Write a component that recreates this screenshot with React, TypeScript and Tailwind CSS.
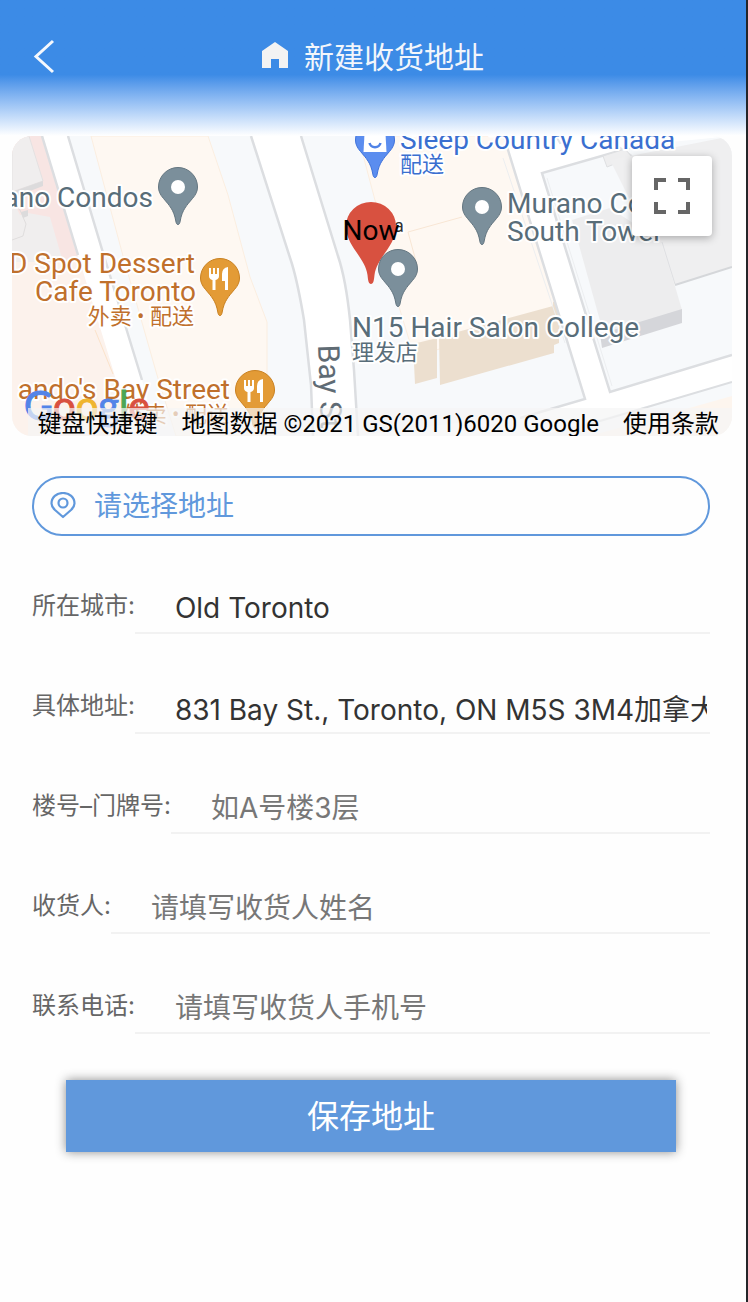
import React from 'react';

type Field = {
  id: string;
  label: string;
  value?: string;
  placeholder?: string;
  type?: string;
};

const fields: Field[] = [
  { id: 'city', label: '所在城市:', value: 'Old Toronto' },
  { id: 'address', label: '具体地址:', value: '831 Bay St., Toronto, ON M5S 3M4加拿大' },
  { id: 'unit', label: '楼号–门牌号:', placeholder: '如A号楼3层' },
  { id: 'receiver', label: '收货人:', placeholder: '请填写收货人姓名' },
  { id: 'phone', label: '联系电话:', placeholder: '请填写收货人手机号', type: 'tel' },
];

function Pin({ x, y, fill, stroke, children }: { x: number; y: number; fill: string; stroke: string; children?: React.ReactNode }) {
  return (
    <g transform={`translate(${x} ${y})`}>
      <path
        d="M0 37.500C-1.500 37.500 -1.800 36 -2.200 34C-4 23 -9 18 -14.500 11.500C-18 7.500 -19.500 4 -19.500 0A19.500 19.500 0 0 1 19.500 0C19.500 4 18 7.500 14.500 11.500C9 18 4 23 2.200 34C1.800 36 1.500 37.500 0 37.500Z"
        fill={fill}
        stroke={stroke}
        strokeWidth="1"
      />
      {children ?? <circle r="7" fill="#fff" />}
    </g>
  );
}

function Cutlery() {
  return (
    <g fill="#fff">
      <path d="M-11 -10H-9V-4H-7V-10H-5V-4H-3V-10H-1V-2Q-1 1 -4.500 2V12H-7.500V2Q-11 1 -11 -2Z" />
      <path d="M8 -11V12H5V3H2V-4Q2 -10 8 -11Z" />
    </g>
  );
}

function MapDrawing() {
  return (
    <svg
      className="block h-full w-full"
      viewBox="12 136 720 300"
      preserveAspectRatio="xMidYMid slice"
      role="img"
      aria-label="地图"
    >
      <rect x="12" y="136" width="720" height="300" fill="#f7f9fb" />

      {/* west blocks */}
      <path d="M12 136H42L80 262L92 292L126 410L134 436H12Z" fill="#fcf2ec" />
      <path d="M12 136H42L79 262H12Z" fill="#f8e5e3" />
      <path d="M12 136H29L43 181L12 192Z" fill="#f0eeee" stroke="#e4e1e1" />
      <path d="M12 192L43 181V186L12 198Z" fill="#dcdbdc" />
      <path d="M12 199L20 215L28 213L50 217L63 262H12Z" fill="#f0eeee" />
      <path d="M12 240L23 236L26 224L20 210L12 204" fill="none" stroke="#dfdddd" />
      <path d="M21 212L28 210V216L23 218Z" fill="#dcdbdc" />
      <path d="M42 136H68L104 256L142 380L157 436H132L113 370L78 255Z" fill="#fff" />
      <path d="M42 136L78 255" stroke="#dcdee1" strokeWidth="2.500" />
      <path d="M68 136L104 256L142 380" fill="none" stroke="#dcdee1" strokeWidth="2.500" />
      <path d="M91 136H208L228 195L250 277L267 322V436H176L157 375L123 256Z" fill="#fef8f2" stroke="#fbeee0" />
      <path d="M95 330L113 374" stroke="#fbe3cb" />

      {/* Bay Street */}
      <path d="M251 136L292 264Q298 284 304 320L311 385L313 436H358L354 370L350 320Q346 280 338 256L301 136Z" fill="#fff" />
      <path d="M251 136L292 264Q298 284 304 320L311 385L313 436M358 436L354 370L350 320Q346 280 338 256L301 136" fill="none" stroke="#dcdee1" strokeWidth="2.500" />

      {/* central block */}
      <path d="M358 136H504L560 303L553 318L414 356L393 287L376 204Z" fill="#fef8f2" stroke="#fbeee0" />
      <path d="M408 232L462 217M408 232L417 265" fill="none" stroke="#f8e6d4" />
      <path d="M413 344L437 338V378L415 384Z" fill="#ecdfcf" />
      <path d="M439 337L553 306V302L559 300V343L554 345V353L440 385Z" fill="#ecdfcf" />

      {/* diagonal street and east block */}
      <path d="M504 136H640L732 102V136L640 145L542 173L610 392L732 355V382L540 436H358L540 412L585 399L508 150Z" fill="#fff" />
      <path d="M504 136L508 150L585 399L520 418" fill="none" stroke="#dcdee1" strokeWidth="2.500" />
      <path d="M732 355L610 392L542 173L640 145" fill="none" stroke="#dcdee1" strokeWidth="2.500" />
      <path d="M732 382L590 424" stroke="#dcdee1" strokeWidth="2" />
      <path d="M547 178L612 386M503 158L565 343" stroke="#eceef0" />
      <path d="M556 136L560 143L570 140M606 138L632 156" fill="none" stroke="#e2e4e6" strokeWidth="2" />
      <path d="M603 156L625 149L632 157L607 167Z" fill="#eeeeef" stroke="#dedfe1" />
      <path d="M572 220L610 208L662 242L682 310L604 335Z" fill="#ededee" />
      <path d="M600 334L682 309V323L602 348Z" fill="#d5d6da" />
      <path d="M610 160L732 136V267L675 285L660 240L635 210Z" fill="#efeff0" />
      <path d="M662 242L675 284" fill="none" stroke="#dedfe2" />
      <path d="M675 285L732 267" stroke="#d5d7da" strokeWidth="2" />
      <path d="M590 436L732 396V436Z" fill="#fdf5ee" />

      <g transform="translate(318 345) rotate(88)">
        <text className="font-['Roboto',sans-serif] text-[30px]" fill="#5f6b74">Bay St</text>
      </g>

      <Pin x={178} y={187} fill="#7b8f9b" stroke="#647681" />
      <Pin x={482} y={207} fill="#7b8f9b" stroke="#647681" />
      <Pin x={220} y={278} fill="#e39b36" stroke="#c98121"><Cutlery /></Pin>
      <Pin x={255} y={390} fill="#e39b36" stroke="#c98121"><Cutlery /></Pin>
      <Pin x={375} y={140} fill="#5b8def" stroke="#3f72da">
        <path d="M-10.500 -6H10.500L11.500 12H-11.500Z" fill="#fff" />
        <path d="M-5.500 3C-4 8.500 4 8.500 5.500 3" fill="none" stroke="#4f82e6" strokeWidth="2.500" />
      </Pin>

      <g
        className="font-['Roboto','Noto_Sans_CJK_SC',sans-serif] text-[28px]"
        stroke="#fff"
        strokeWidth="4"
        strokeLinejoin="round"
        paintOrder="stroke"
      >
        <g fill="#586d79">
          <text x="153" y="207" textAnchor="end">ano Condos</text>
          <text x="507" y="213">Murano Condos</text>
          <text x="507" y="241">South Tower</text>
          <text x="352" y="337">N15 Hair Salon College</text>
          <text x="352" y="360" className="text-[22px]">理发店</text>
        </g>
        <g fill="#c0702c">
          <text x="195" y="273" textAnchor="end">D Spot Dessert</text>
          <text x="196" y="301" textAnchor="end">Cafe Toronto</text>
          <text x="194" y="324" textAnchor="end" className="text-[22px]">外卖 • 配送</text>
          <text x="230" y="399" textAnchor="end">ando's Bay Street</text>
          <text x="229" y="422" textAnchor="end" className="text-[22px]">外卖 • 配送</text>
        </g>
        <g fill="#3a6fd0">
          <text x="400" y="149">Sleep Country Canada</text>
          <text x="400" y="172" className="text-[22px]">配送</text>
        </g>
        <text x="394" y="232" className="text-[18px]" fill="#333">a</text>
      </g>

      <path d="M371 284C368.500 284 368 280 367.500 275C365 257 346 246 346 226A25 24 0 0 1 396 226C396 246 377 257 374.500 275C374 280 373.500 284 371 284Z" fill="#d85140" />
      <Pin x={398} y={269} fill="#7b8f9b" stroke="#647681" />
      <text x="371" y="240" textAnchor="middle" className="font-['Roboto',sans-serif] text-[28px]" fill="#000">Now</text>

      <text x="24" y="420" className="font-['Lato',sans-serif] text-[40px]" strokeWidth="1">
        <tspan fill="#5384e8" stroke="#5384e8">G</tspan>
        <tspan fill="#d9503f" stroke="#d9503f">o</tspan>
        <tspan fill="#efb52f" stroke="#efb52f">o</tspan>
        <tspan fill="#5384e8" stroke="#5384e8">g</tspan>
        <tspan fill="#4aa657" stroke="#4aa657">l</tspan>
        <tspan fill="#d9503f" stroke="#d9503f">e</tspan>
      </text>
    </svg>
  );
}

export default function App() {
  return (
    <div className="min-h-screen border-r-2 border-[#242529] bg-[#fefefe] font-['Inter','Noto_Sans_CJK_SC',sans-serif]">
      <header className="grid h-34 grid-cols-[88px_1fr_88px] items-start bg-linear-to-b from-[#3c8be6] from-55% to-white">
        <button type="button" aria-label="返回" className="mt-9 ml-6 flex h-10 w-10 items-center justify-center">
          <svg width="24" height="36" viewBox="0 0 24 36" fill="none" stroke="#f5f8fd" strokeWidth="3">
            <path d="M21 3L4 18.500L21 34" />
          </svg>
        </button>
        <h1 className="mt-[35px] flex items-baseline justify-center gap-4 text-[30px] text-[#f3f6fb]">
          <svg width="26" height="26" viewBox="0 0 26 26" fill="#f3f3f3" aria-hidden="true">
            <path d="M13 0L26 9V26H17V17H9V26H0V9Z" />
          </svg>
          新建收货地址
        </h1>
      </header>

      <main className="pr-[14px] pl-3">
        <section className="relative h-[300px] overflow-hidden rounded-[20px]">
          <MapDrawing />
          <button
            type="button"
            aria-label="全屏"
            className="absolute top-5 right-5 flex h-20 w-20 items-center justify-center rounded bg-white shadow-[0_2px_8px_rgba(0,0,0,0.3)]"
          >
            <svg width="36" height="36" viewBox="0 0 36 36" fill="none" stroke="#666" strokeWidth="4">
              <path d="M2 12V2H12M24 2H34V12M34 24V34H24M12 34H2V24" />
            </svg>
          </button>
          <div className="absolute right-0 bottom-0 left-4 flex h-7 items-center justify-end gap-6 bg-[#f5f5f5]/70 pt-1 pr-[13px] font-['Roboto','Noto_Sans_CJK_SC',sans-serif] text-2xl whitespace-nowrap text-black">
            <button type="button">键盘快捷键</button>
            <span>地图数据 ©2021 GS(2011)6020 Google</span>
            <a href="#terms">使用条款</a>
          </div>
        </section>

        <form className="mt-10 pr-[22px] pl-5">
          <button
            type="button"
            className="flex h-15 w-full items-center gap-[18px] rounded-full border-2 border-[#6098dc] pl-4 text-[28px] text-[#6098dc]"
          >
            <svg width="26" height="28" viewBox="0 0 26 28" fill="none" stroke="currentColor" strokeWidth="2.200" aria-hidden="true">
              <path d="M13 25L5 18C2.500 15.500 1.500 13.500 1.500 11.500C1.500 5 6.500 1 13 1S24.500 5 24.500 11.500C24.500 13.500 23.500 15.500 21 18Z" strokeLinejoin="round" />
              <circle cx="13" cy="11" r="4.500" />
            </svg>
            请选择地址
          </button>

          <div className="mt-12 flex flex-col gap-[50px]">
            {fields.map((field) => (
              <div key={field.id} className="flex items-start">
                <label htmlFor={field.id} className="shrink-0 text-2xl leading-11 text-[#666]">
                  {field.label}
                </label>
                <input
                  id={field.id}
                  type={field.type ?? 'text'}
                  defaultValue={field.value}
                  placeholder={field.placeholder}
                  className="h-[50px] min-w-0 flex-1 border-b-2 border-[#f2f2f2] bg-transparent pr-[3px] pl-10 text-[28px] text-[#333] outline-none placeholder:text-[#777]"
                />
              </div>
            ))}
          </div>

          <div className="mt-[46px] px-[34px]">
            <button type="submit" className="h-18 w-full bg-[#6098dc] pt-0.5 text-[32px] text-white shadow-[0_0_10px_rgba(0,0,0,0.45)]">
              保存地址
            </button>
          </div>
        </form>
      </main>
    </div>
  );
}
